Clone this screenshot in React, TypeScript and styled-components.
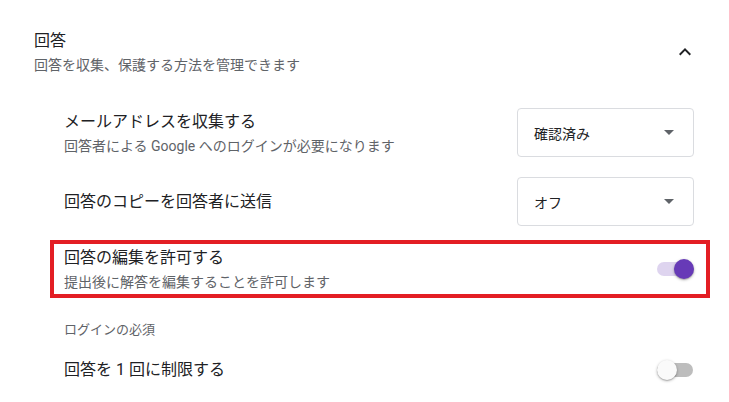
import styled, { createGlobalStyle } from "styled-components"

const GlobalStyle = createGlobalStyle`
    body {
        margin: 0;
        background: #ffffff;
        font-family: Roboto, "Noto Sans CJK JP", sans-serif;
        color: #202124;
    }
`

type ToggleProps = { $on?: boolean }

const Toggle = ({ on }: { on?: boolean }) => (
    <Switch>
        <Track $on={on} />
        <Thumb $on={on} />
    </Switch>
)

const Dropdown = ({ value }: { value: string }) => (
    <Select>
        <SelectText>{value}</SelectText>
        <Arrow />
    </Select>
)

const App = () => {
    return (
        <Page>
            <GlobalStyle />

            <Header>
                <div>
                    <HeaderTitle>回答</HeaderTitle>
                    <HeaderSub>回答を収集、保護する方法を管理できます</HeaderSub>
                </div>
                <Chevron viewBox="0 0 24 24">
                    <path d="M12 8l-6 6 1.41 1.41L12 10.83l4.59 4.58L18 14z" fill="#202124" />
                </Chevron>
            </Header>

            <List>
                <Row>
                    <TextBlock>
                        <RowTitle>メールアドレスを収集する</RowTitle>
                        <RowSub>回答者による Google へのログインが必要になります</RowSub>
                    </TextBlock>
                    <Dropdown value="確認済み" />
                </Row>

                <Row $gap={20}>
                    <TextBlock>
                        <RowTitle>回答のコピーを回答者に送信</RowTitle>
                    </TextBlock>
                    <Dropdown value="オフ" />
                </Row>

                <Highlight>
                    <Row>
                        <TextBlock>
                            <RowTitle>回答の編集を許可する</RowTitle>
                            <RowSub>提出後に解答を編集することを許可します</RowSub>
                        </TextBlock>
                        <Toggle on />
                    </Row>
                </Highlight>

                <SectionLabel>ログインの必須</SectionLabel>

                <Row $gap={18}>
                    <TextBlock>
                        <RowTitle>回答を 1 回に制限する</RowTitle>
                    </TextBlock>
                    <Toggle />
                </Row>
            </List>
        </Page>
    )
}

const Page = styled.main`
    width: 100%;
    min-height: 402px;
    box-sizing: border-box;
    padding: 29px 35px 0 34px;
`

const Header = styled.div`
    display: flex;
    align-items: center;
    justify-content: space-between;
`

const HeaderTitle = styled.div`
    font-size: 16px;
    line-height: 24px;
    color: #202124;
`

const HeaderSub = styled.div`
    font-size: 14px;
    line-height: 20px;
    margin-top: 2px;
    color: #5f6368;
`

const Chevron = styled.svg`
    width: 24px;
    height: 24px;
    margin-right: -3px;
    flex-shrink: 0;
`

const List = styled.div`
    display: flex;
    flex-direction: column;
    padding-left: 30px;
    margin-top: 33px;
`

const Row = styled.div<{ $gap?: number }>`
    display: flex;
    align-items: center;
    justify-content: space-between;
    margin-top: ${(p) => p.$gap ?? 0}px;
`

const TextBlock = styled.div`
    display: flex;
    flex-direction: column;
    gap: 2px;
`

const RowTitle = styled.div`
    font-size: 16px;
    line-height: 24px;
    color: #202124;
`

const RowSub = styled.div`
    font-size: 14px;
    line-height: 20px;
    color: #5f6368;
`

const Select = styled.div`
    width: 177px;
    height: 49px;
    box-sizing: border-box;
    border: 1px solid #dadce0;
    border-radius: 4px;
    display: flex;
    align-items: center;
    justify-content: space-between;
    padding: 0 19px 0 16px;
`

const SelectText = styled.span`
    font-size: 14px;
    color: #202124;
`

const Arrow = styled.span`
    width: 0;
    height: 0;
    border-left: 5px solid transparent;
    border-right: 5px solid transparent;
    border-top: 5px solid #5f6368;
`

const Highlight = styled.div`
    margin: 14px -16px 0 -14px;
    border: 4px solid #e31e24;
    padding: 2px 12px 2px 10px;
`

const SectionLabel = styled.div`
    margin-top: 22px;
    font-size: 13px;
    line-height: 20px;
    color: #5f6368;
`

const Switch = styled.div`
    position: relative;
    width: 37px;
    height: 20px;
    flex-shrink: 0;
`

const Track = styled.div<ToggleProps>`
    position: absolute;
    left: 0;
    top: 3px;
    width: 36px;
    height: 14px;
    border-radius: 7px;
    background: ${(p) => (p.$on ? "rgba(103, 58, 183, 0.22)" : "#bdbdbd")};
`

const Thumb = styled.div<ToggleProps>`
    position: absolute;
    top: 0;
    left: ${(p) => (p.$on ? "17px" : "0")};
    width: 20px;
    height: 20px;
    border-radius: 50%;
    background: ${(p) => (p.$on ? "#673ab7" : "#fafafa")};
    box-shadow: 0 1px 3px rgba(0, 0, 0, 0.3), 0 1px 1px rgba(0, 0, 0, 0.14);
`

export default App
